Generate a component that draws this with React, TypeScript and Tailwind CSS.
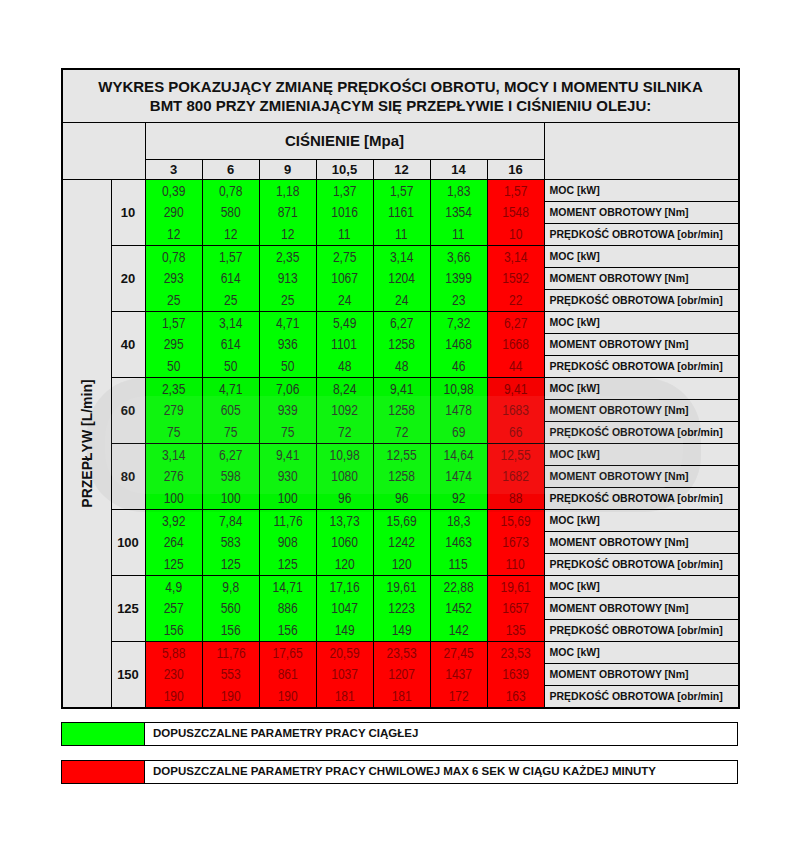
import React from 'react';

const PRESSURES = ['3', '6', '9', '10,5', '12', '14', '16'];

type FlowRow = { flow: number; moc: string[]; moment: string[]; speed: string[] };

const ROWS: FlowRow[] = [
  { flow: 10, moc: ['0,39', '0,78', '1,18', '1,37', '1,57', '1,83', '1,57'], moment: ['290', '580', '871', '1016', '1161', '1354', '1548'], speed: ['12', '12', '12', '11', '11', '11', '10'] },
  { flow: 20, moc: ['0,78', '1,57', '2,35', '2,75', '3,14', '3,66', '3,14'], moment: ['293', '614', '913', '1067', '1204', '1399', '1592'], speed: ['25', '25', '25', '24', '24', '23', '22'] },
  { flow: 40, moc: ['1,57', '3,14', '4,71', '5,49', '6,27', '7,32', '6,27'], moment: ['295', '614', '936', '1101', '1258', '1468', '1668'], speed: ['50', '50', '50', '48', '48', '46', '44'] },
  { flow: 60, moc: ['2,35', '4,71', '7,06', '8,24', '9,41', '10,98', '9,41'], moment: ['279', '605', '939', '1092', '1258', '1478', '1683'], speed: ['75', '75', '75', '72', '72', '69', '66'] },
  { flow: 80, moc: ['3,14', '6,27', '9,41', '10,98', '12,55', '14,64', '12,55'], moment: ['276', '598', '930', '1080', '1258', '1474', '1682'], speed: ['100', '100', '100', '96', '96', '92', '88'] },
  { flow: 100, moc: ['3,92', '7,84', '11,76', '13,73', '15,69', '18,3', '15,69'], moment: ['264', '583', '908', '1060', '1242', '1463', '1673'], speed: ['125', '125', '125', '120', '120', '115', '110'] },
  { flow: 125, moc: ['4,9', '9,8', '14,71', '17,16', '19,61', '22,88', '19,61'], moment: ['257', '560', '886', '1047', '1223', '1452', '1657'], speed: ['156', '156', '156', '149', '149', '142', '135'] },
  { flow: 150, moc: ['5,88', '11,76', '17,65', '20,59', '23,53', '27,45', '23,53'], moment: ['230', '553', '861', '1037', '1207', '1437', '1639'], speed: ['190', '190', '190', '181', '181', '172', '163'] },
];

const LABELS = ['MOC [kW]', 'MOMENT OBROTOWY [Nm]', 'PRĘDKOŚĆ OBROTOWA [obr/min]'];

const font = "font-['Liberation_Sans',Arial,sans-serif]";

function Num({ value }: { value: string }) {
  return (
    <div className="flex h-[21.67px] items-center justify-center">
      <span className="inline-block scale-x-[0.86] text-[14px] leading-none">{value}</span>
    </div>
  );
}

function App() {
  return (
    <div className={`min-h-[842px] w-[800px] bg-white pl-[61px] pt-[68px] ${font}`}>
      <div className="relative w-[677px]">
        <table className="w-[677px] table-fixed border-collapse border-2 border-black">
          <colgroup>
            <col className="w-[49px]" />
            <col className="w-[34px]" />
            {PRESSURES.map((p) => (
              <col key={p} className="w-[57px]" />
            ))}
            <col className="w-[195px]" />
          </colgroup>
          <tbody>
            <tr>
              <td colSpan={10} className="h-[53px] border border-black bg-[#e6e6e6] p-0 text-center text-[15px] font-bold leading-[19px] text-[#111]">
                WYKRES POKAZUJĄCY ZMIANĘ PRĘDKOŚCI OBROTU, MOCY I MOMENTU SILNIKA
                <br />
                BMT 800 PRZY ZMIENIAJĄCYM SIĘ PRZEPŁYWIE I CIŚNIENIU OLEJU:
              </td>
            </tr>
            <tr>
              <td colSpan={2} rowSpan={2} className="border border-black bg-[#e6e6e6] p-0" />
              <td colSpan={7} className="h-[37px] border border-black bg-[#e6e6e6] p-0 pt-[2px] text-center text-[15px] font-bold text-[#111]">
                CIŚNIENIE [Mpa]
              </td>
              <td rowSpan={2} className="border border-black bg-[#e6e6e6] p-0" />
            </tr>
            <tr>
              {PRESSURES.map((p) => (
                <td key={p} className="h-[20px] border border-black bg-[#e6e6e6] p-0 text-center text-[13px] font-bold text-[#111]">
                  {p}
                </td>
              ))}
            </tr>
            {ROWS.map((row, gi) =>
              [0, 1, 2].map((sub) => (
                <tr key={`${row.flow}-${sub}`}>
                  {gi === 0 && sub === 0 && (
                    <td rowSpan={24} className="border border-black bg-[#e6e6e6] p-0">
                      <div className="flex items-center justify-center">
                        <span className="-rotate-90 whitespace-nowrap text-[14px] font-bold text-[#111]">PRZEPŁYW [L/min]</span>
                      </div>
                    </td>
                  )}
                  {sub === 0 && (
                    <td rowSpan={3} className="border border-black bg-[#e6e6e6] p-0 text-center text-[13px] font-bold text-[#111]">
                      {row.flow}
                    </td>
                  )}
                  {sub === 0 &&
                    PRESSURES.map((p, ci) => {
                      const red = ci === 6 || row.flow === 150;
                      return (
                        <td
                          key={p}
                          rowSpan={3}
                          className={`border border-black p-0 text-center ${red ? 'bg-[#ff0000] text-[#8c0000]' : 'bg-[#00ff00] text-[#263826]'}`}
                        >
                          <div className="flex h-[65px] flex-col">
                            <Num value={row.moc[ci]} />
                            <Num value={row.moment[ci]} />
                            <Num value={row.speed[ci]} />
                          </div>
                        </td>
                      );
                    })}
                  <td className="h-[21px] border border-black bg-[#e6e6e6] px-[5px] py-0 text-left text-[10.5px] font-bold text-[#111]">
                    {LABELS[sub]}
                  </td>
                </tr>
              ))
            )}
          </tbody>
        </table>

        {/* faint watermark logo behind the data */}
        <div className="pointer-events-none absolute left-[26px] top-[310px] h-[134px] w-[614px] rounded-[56px] bg-black/[0.045]">
          <div className="absolute inset-[18px] rounded-[40px] bg-white/[0.06]" />
        </div>
      </div>

      <div className="mt-[13px] flex w-[677px] flex-col gap-[14px]">
        <div className="flex h-[24px] border border-black">
          <div className="w-[83px] border-r border-black bg-[#00ff00]" />
          <div className="flex flex-1 items-center pl-[8px] text-[11.5px] font-bold text-[#111]">
            DOPUSZCZALNE PARAMETRY PRACY CIĄGŁEJ
          </div>
        </div>
        <div className="flex h-[24px] border border-black">
          <div className="w-[83px] border-r border-black bg-[#ff0000]" />
          <div className="flex flex-1 items-center pl-[8px] text-[11.5px] font-bold text-[#111]">
            DOPUSZCZALNE PARAMETRY PRACY CHWILOWEJ MAX 6 SEK W CIĄGU KAŻDEJ MINUTY
          </div>
        </div>
      </div>
    </div>
  );
}

export default App;
